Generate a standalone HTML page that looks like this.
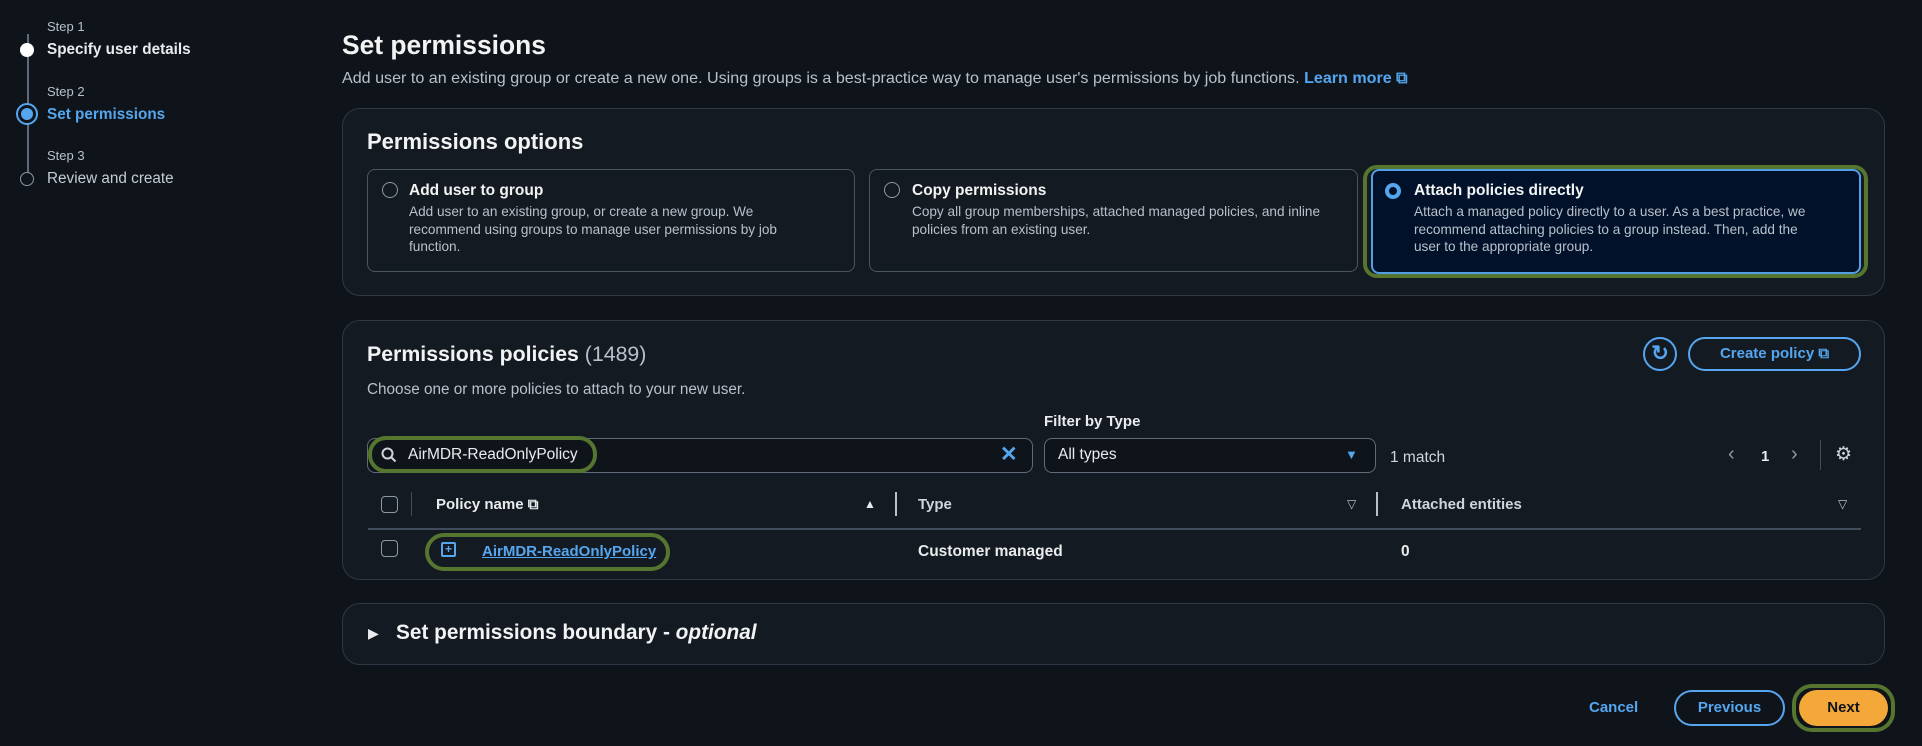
<!DOCTYPE html>
<html><head><meta charset="utf-8"><style>
*{box-sizing:border-box;margin:0;padding:0}
body{width:1922px;height:746px;background:#0f141a;font-family:"Liberation Sans",sans-serif;color:#d1d5db;position:relative;overflow:hidden}
.a{position:absolute;white-space:nowrap}
.box{position:absolute;border:1.5px solid #2f3844;border-radius:18px;background:#141a22}
.card{position:absolute;border:1.5px solid #4a5562;border-radius:8px;background:#141a22}
.rad{position:absolute;width:16px;height:16px;border-radius:50%;border:1.5px solid #8d99a8}
.g{position:absolute;border:4px solid #56762f;border-radius:14px}
.blue{color:#55a6ef}
.b{font-weight:bold}
.small{font-size:13.6px;color:#b8c0cb;line-height:17.5px}
.cb{position:absolute;width:17px;height:17px;border:1.5px solid #8d99a8;border-radius:4px}
</style></head><body>
<div class="a" style="left:27px;top:34px;width:1.5px;height:140px;background:#5f6b7a"></div>
<div class="a" style="left:47px;top:19px;font-size:13px;color:#b8c0cb">Step 1</div>
<div class="a" style="left:20px;top:43px;width:14px;height:14px;border-radius:50%;background:#fff"></div>
<div class="a b" style="left:47px;top:41px;font-size:15.3px;color:#e9ebed">Specify user details</div>
<div class="a" style="left:47px;top:84px;font-size:13px;color:#b8c0cb">Step 2</div>
<div class="a" style="left:16px;top:103px;width:22px;height:22px;border-radius:50%;border:2px solid #55a6ef;background:#0f141a"></div>
<div class="a" style="left:21px;top:108px;width:12px;height:12px;border-radius:50%;background:#55a6ef"></div>
<div class="a b blue" style="left:47px;top:106px;font-size:15.3px">Set permissions</div>
<div class="a" style="left:47px;top:148px;font-size:13px;color:#b8c0cb">Step 3</div>
<div class="a" style="left:20px;top:172px;width:14px;height:14px;border-radius:50%;border:1.5px solid #8d99a8;background:#0f141a"></div>
<div class="a" style="left:47px;top:170px;font-size:15.3px;color:#c6ccd4">Review and create</div>

<div class="a b" style="left:342px;top:30px;font-size:26.4px;color:#f2f3f3">Set permissions</div>
<div class="a" style="left:342px;top:69px;font-size:16.1px;color:#b8c0cb">Add user to an existing group or create a new one. Using groups is a best-practice way to manage user's permissions by job functions. <span class="blue b">Learn more ⧉</span></div>

<div class="box" style="left:342px;top:108px;width:1543px;height:188px"></div>
<div class="a b" style="left:367px;top:129px;font-size:22px;color:#f2f3f3">Permissions options</div>
<div class="card" style="left:367px;top:169px;width:488px;height:103px"></div>
<div class="rad" style="left:382px;top:182px"></div>
<div class="a b" style="left:409px;top:182px;font-size:15.5px;color:#f2f3f3">Add user to group</div>
<div class="a small" style="left:409px;top:203px">Add user to an existing group, or create a new group. We<br>recommend using groups to manage user permissions by job<br>function.</div>
<div class="card" style="left:869px;top:169px;width:489px;height:103px"></div>
<div class="rad" style="left:884px;top:182px"></div>
<div class="a b" style="left:912px;top:182px;font-size:15.5px;color:#f2f3f3">Copy permissions</div>
<div class="a small" style="left:912px;top:203px">Copy all group memberships, attached managed policies, and inline<br>policies from an existing user.</div>
<div class="g" style="left:1363px;top:165px;width:505px;height:113px"></div>
<div class="a" style="left:1371px;top:169px;width:490px;height:105px;border:2px solid #539fe5;border-radius:8px;background:#001129"></div>
<div class="a" style="left:1385px;top:183px;width:16px;height:16px;border-radius:50%;border:4.5px solid #55a6ef;background:#001129"></div>
<div class="a b" style="left:1414px;top:182px;font-size:15.5px;color:#f2f3f3">Attach policies directly</div>
<div class="a small" style="left:1414px;top:203px">Attach a managed policy directly to a user. As a best practice, we<br>recommend attaching policies to a group instead. Then, add the<br>user to the appropriate group.</div>

<div class="box" style="left:342px;top:320px;width:1543px;height:260px"></div>
<div class="a b" style="left:367px;top:342px;font-size:21.3px;color:#f2f3f3">Permissions policies <span style="font-weight:normal;color:#b8c0cb">(1489)</span></div>
<div class="a" style="left:1643px;top:337px;width:34px;height:34px;border-radius:50%;border:2px solid #55a6ef;color:#55a6ef;font-size:21px;text-align:center;line-height:29px;font-weight:bold">↻</div>
<div class="a b blue" style="left:1688px;top:337px;width:173px;height:34px;border:2px solid #55a6ef;border-radius:17px;font-size:15px;text-align:center;line-height:30px">Create policy ⧉</div>
<div class="a" style="left:367px;top:381px;font-size:15.3px;color:#b8c0cb">Choose one or more policies to attach to your new user.</div>
<div class="a b" style="left:1044px;top:413px;font-size:15px;color:#e9ebed">Filter by Type</div>
<div class="a" style="left:367px;top:438px;width:666px;height:35px;border:1.5px solid #5f6b7a;border-radius:8px;background:#0f141a"></div>
<div class="g" style="left:368px;top:436px;width:229px;height:37px;border-radius:18px"></div>
<svg class="a" style="left:381px;top:447px" width="16" height="16"><circle cx="6.5" cy="6.5" r="5" fill="none" stroke="#d1d5db" stroke-width="2"/><path d="M10 10l4.5 4.5" stroke="#d1d5db" stroke-width="2"/></svg>
<div class="a" style="left:408px;top:446px;font-size:15.5px;color:#e9ebed">AirMDR-ReadOnlyPolicy</div>
<div class="a blue b" style="left:1000px;top:442px;font-size:21px">✕</div>
<div class="a" style="left:1044px;top:438px;width:332px;height:35px;border:1.5px solid #5f6b7a;border-radius:8px;background:#0f141a"></div>
<div class="a" style="left:1058px;top:446px;font-size:15.5px;color:#e9ebed">All types</div>
<div class="a blue" style="left:1345px;top:447px;font-size:13px">▼</div>
<div class="a" style="left:1390px;top:449px;font-size:15.5px;color:#d1d5db">1 match</div>
<div class="a" style="left:1728px;top:443px;font-size:20px;color:#8d99a8">‹</div>
<div class="a b" style="left:1761px;top:448px;font-size:15px;color:#e9ebed">1</div>
<div class="a" style="left:1791px;top:443px;font-size:20px;color:#8d99a8">›</div>
<div class="a" style="left:1820px;top:440px;width:1px;height:30px;background:#414d5c"></div>
<div class="a" style="left:1835px;top:443px;font-size:19px;color:#d1d5db">⚙</div>
<div class="cb" style="left:381px;top:496px"></div>
<div class="a" style="left:411px;top:492px;width:1px;height:24px;background:#414d5c"></div>
<div class="a b" style="left:436px;top:496px;font-size:15px;color:#e9ebed">Policy name ⧉</div>
<div class="a" style="left:864px;top:497px;font-size:12px;color:#e9ebed">▲</div>
<div class="a" style="left:895px;top:492px;width:2px;height:24px;background:#b8c0cb"></div>
<div class="a b" style="left:918px;top:496px;font-size:15px;color:#d1d5db">Type</div>
<div class="a" style="left:1347px;top:497px;font-size:12px;color:#b8c0cb">▽</div>
<div class="a" style="left:1376px;top:492px;width:2px;height:24px;background:#b8c0cb"></div>
<div class="a b" style="left:1401px;top:496px;font-size:15px;color:#d1d5db">Attached entities</div>
<div class="a" style="left:1838px;top:497px;font-size:12px;color:#b8c0cb">▽</div>
<div class="a" style="left:368px;top:528px;width:1493px;height:1.5px;background:#414d5c"></div>
<div class="cb" style="left:381px;top:540px"></div>
<div class="g" style="left:425px;top:533px;width:245px;height:38px;border-radius:19px"></div>
<div class="a" style="left:441px;top:542px;width:15px;height:15px;border:2px solid #55a6ef;border-radius:2px;color:#55a6ef;font-size:12px;line-height:10px;text-align:center;font-weight:bold">+</div>
<div class="a b blue" style="left:482px;top:543px;font-size:15px;text-decoration:underline">AirMDR-ReadOnlyPolicy</div>
<div class="a b" style="left:918px;top:543px;font-size:15.5px;color:#e9ebed">Customer managed</div>
<div class="a b" style="left:1401px;top:543px;font-size:15.5px;color:#e9ebed">0</div>

<div class="box" style="left:342px;top:603px;width:1543px;height:62px"></div>
<div class="a" style="left:368px;top:625px;font-size:14px;color:#e9ebed">▶</div>
<div class="a b" style="left:396px;top:621px;font-size:20.8px;color:#f2f3f3">Set permissions boundary - <i>optional</i></div>

<div class="a b blue" style="left:1589px;top:699px;font-size:15px">Cancel</div>
<div class="a b blue" style="left:1674px;top:690px;width:111px;height:36px;border:2px solid #55a6ef;border-radius:18px;font-size:15px;text-align:center;line-height:32px">Previous</div>
<div class="g" style="left:1792px;top:684px;width:103px;height:48px;border-radius:20px"></div>
<div class="a b" style="left:1799px;top:690px;width:89px;height:36px;background:#f5a83a;border-radius:18px;font-size:15px;text-align:center;line-height:36px;color:#0f141a">Next</div>
</body></html>
